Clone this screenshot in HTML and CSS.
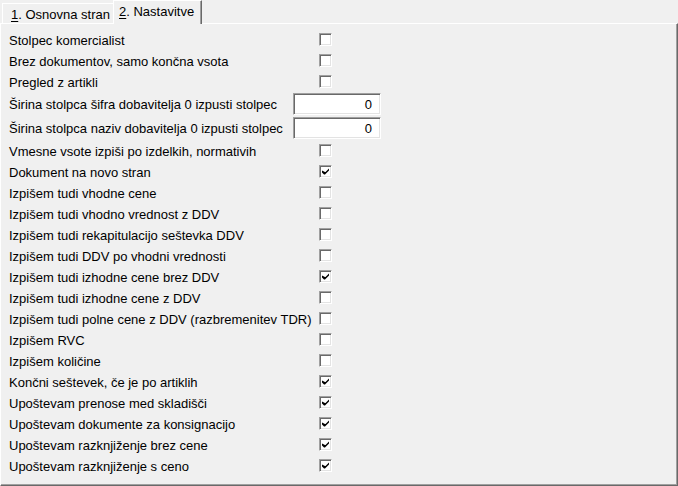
FILE: index.html
```html
<!DOCTYPE html>
<html lang="sl">
<head>
<meta charset="utf-8">
<title>Nastavitve</title>
<link rel="stylesheet" href="styles.css">
</head>
<body>
<div class="window">
  <div class="tabs">
    <div class="tab"><u>1</u>. Osnovna stran</div>
    <div class="tab active"><u>2</u>. Nastavitve</div>
  </div>
  <div class="panel">
    <div class="form">
      <div class="row"><span class="lbl">Stolpec komercialist</span><span class="chk"></span></div>
      <div class="row"><span class="lbl">Brez dokumentov, samo končna vsota</span><span class="chk"></span></div>
      <div class="row"><span class="lbl">Pregled z artikli</span><span class="chk"></span></div>
      <div class="row tall"><span class="lbl">Širina stolpca šifra dobavitelja 0 izpusti stolpec</span><span class="num">0</span></div>
      <div class="row tall"><span class="lbl">Širina stolpca naziv dobavitelja 0 izpusti stolpec</span><span class="num">0</span></div>
      <div class="row"><span class="lbl">Vmesne vsote izpiši po izdelkih, normativih</span><span class="chk"></span></div>
      <div class="row"><span class="lbl">Dokument na novo stran</span><span class="chk on"><svg viewBox="0 0 7 7"><path d="M0 2.5v2l2 2h1l4-4v-2l-3.5 3.5h-.5z"/></svg></span></div>
      <div class="row"><span class="lbl">Izpišem tudi vhodne cene</span><span class="chk"></span></div>
      <div class="row"><span class="lbl">Izpišem tudi vhodno vrednost z DDV</span><span class="chk"></span></div>
      <div class="row"><span class="lbl">Izpišem tudi rekapitulacijo seštevka DDV</span><span class="chk"></span></div>
      <div class="row"><span class="lbl">Izpišem tudi DDV po vhodni vrednosti</span><span class="chk"></span></div>
      <div class="row"><span class="lbl">Izpišem tudi izhodne cene brez DDV</span><span class="chk on"><svg viewBox="0 0 7 7"><path d="M0 2.5v2l2 2h1l4-4v-2l-3.5 3.5h-.5z"/></svg></span></div>
      <div class="row"><span class="lbl">Izpišem tudi izhodne cene z DDV</span><span class="chk"></span></div>
      <div class="row"><span class="lbl">Izpišem tudi polne cene z DDV (razbremenitev TDR)</span><span class="chk"></span></div>
      <div class="row"><span class="lbl">Izpišem RVC</span><span class="chk"></span></div>
      <div class="row"><span class="lbl">Izpišem količine</span><span class="chk"></span></div>
      <div class="row"><span class="lbl">Končni seštevek, če je po artiklih</span><span class="chk on"><svg viewBox="0 0 7 7"><path d="M0 2.5v2l2 2h1l4-4v-2l-3.5 3.5h-.5z"/></svg></span></div>
      <div class="row"><span class="lbl">Upoštevam prenose med skladišči</span><span class="chk on"><svg viewBox="0 0 7 7"><path d="M0 2.5v2l2 2h1l4-4v-2l-3.5 3.5h-.5z"/></svg></span></div>
      <div class="row"><span class="lbl">Upoštevam dokumente za konsignacijo</span><span class="chk on"><svg viewBox="0 0 7 7"><path d="M0 2.5v2l2 2h1l4-4v-2l-3.5 3.5h-.5z"/></svg></span></div>
      <div class="row"><span class="lbl">Upoštevam razknjiženje brez cene</span><span class="chk on"><svg viewBox="0 0 7 7"><path d="M0 2.5v2l2 2h1l4-4v-2l-3.5 3.5h-.5z"/></svg></span></div>
      <div class="row"><span class="lbl">Upoštevam razknjiženje s ceno</span><span class="chk on"><svg viewBox="0 0 7 7"><path d="M0 2.5v2l2 2h1l4-4v-2l-3.5 3.5h-.5z"/></svg></span></div>
    </div>
  </div>
</div>
</body>
</html>
```
FILE: styles.css
```css
html, body {
  margin: 0;
  padding: 0;
  background: #f0f0f0;
}

body {
  font-family: "Liberation Sans", Arial, sans-serif;
  font-size: 13px;
  color: #000;
}

.window {
  width: 678px;
  height: 486px;
  display: flex;
  flex-direction: column;
  overflow: hidden;
}

/* tab strip */
.tabs {
  display: flex;
  align-items: flex-end;
  height: 23px;
  padding-left: 2px;
  position: relative;
  z-index: 1;
}

.tab {
  height: 20px;
  box-sizing: border-box;
  padding: 3px 4px 0 8px;
  border-top: 1px solid #fff;
  border-left: 1px solid #fff;
  line-height: 15px;
  white-space: nowrap;
}

.tab u {
  text-decoration-thickness: 1px;
  text-underline-offset: 2px;
}

.tab.active {
  height: 24px;
  margin-bottom: -1px;
  margin-left: -1px;
  padding: 3px 7px 0 5px;
  border-right: 1px solid #696969;
  box-shadow: inset -1px 0 0 #a0a0a0;
  background: #f0f0f0;
}

/* tab page */
.panel {
  flex: 1;
  border-top: 1px solid #fff;
  border-left: 1px solid #fff;
  border-right: 1px solid #696969;
  border-bottom: 1px solid #696969;
  box-shadow: inset -1px -1px 0 #a0a0a0;
  padding: 5px 0 0 8px;
}

/* label column, control column; the two edit-field rows are taller */
.form {
  display: grid;
  grid-template-columns: 284px 88px;
  grid-template-rows: repeat(3, 21px) 24px 24px;
  grid-auto-rows: 21px;
}

.row {
  display: contents;
}

.lbl {
  align-self: center;
  white-space: nowrap;
  padding-top: 1px;
}

.chk {
  align-self: center;
  justify-self: start;
  margin-left: 26px;
  width: 13px;
  height: 13px;
  box-sizing: border-box;
  background: #fff;
  border-top: 1px solid #a0a0a0;
  border-left: 1px solid #a0a0a0;
  border-right: 1px solid #fff;
  border-bottom: 1px solid #fff;
  box-shadow: inset 1px 1px 0 #696969, inset -1px -1px 0 #e3e3e3;
  display: flex;
  align-items: center;
  justify-content: center;
}

.chk svg {
  width: 7px;
  height: 7px;
  fill: #000;
  display: block;
}

.num {
  align-self: center;
  width: 88px;
  height: 22px;
  box-sizing: border-box;
  background: #fff;
  border-top: 1px solid #a0a0a0;
  border-left: 1px solid #a0a0a0;
  border-right: 1px solid #fff;
  border-bottom: 1px solid #fff;
  box-shadow: inset 1px 1px 0 #696969, inset -1px -1px 0 #e3e3e3;
  text-align: right;
  padding: 1px 8px 0 0;
  line-height: 19px;
}
```
